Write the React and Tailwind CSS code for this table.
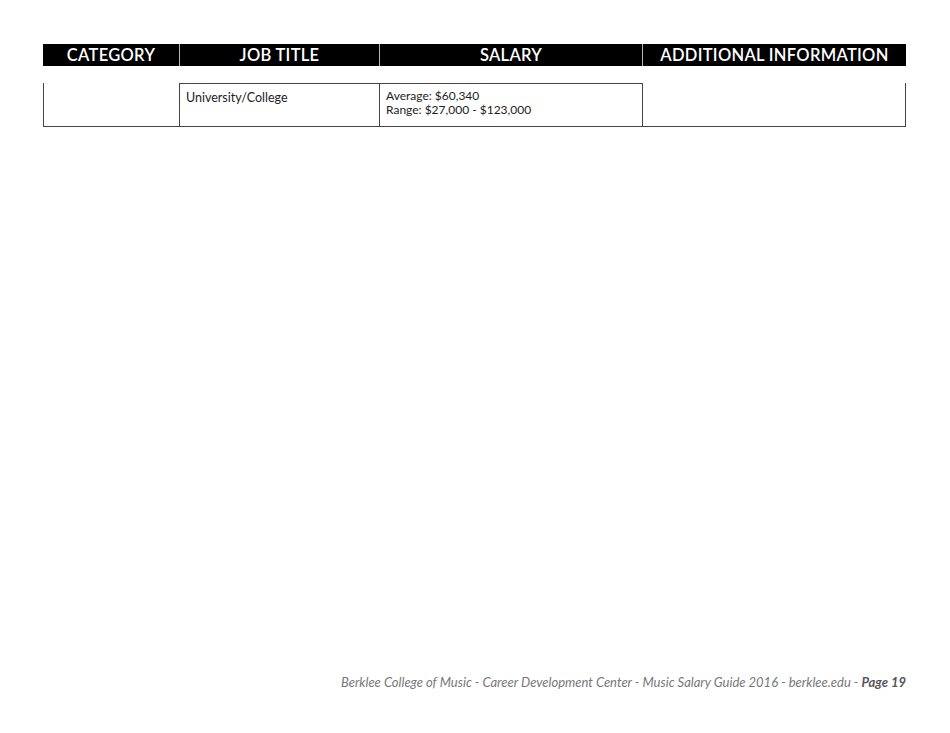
const columns = ["CATEGORY", "JOB TITLE", "SALARY", "ADDITIONAL INFORMATION"];

const App = () => {
  return (
    <div
      className="min-h-[733px] bg-white flex flex-col"
      style={{ fontFamily: "Lato, 'Open Sans', sans-serif" }}
    >
      <div className="pt-[44px] pl-[43px]">
        {/* header bar */}
        <div className="grid grid-cols-[136px_200px_263px_264px] w-[863px] h-[22px] bg-black">
          {columns.map((col, index) => (
            <div
              key={col}
              className={`flex items-center justify-center pt-px text-white font-semibold text-[16.5px] leading-none tracking-[0.3px] ${
                index > 0 ? "border-l border-[#b5b5b5]" : ""
              }`}
            >
              {col}
            </div>
          ))}
        </div>

        {/* data row */}
        <div className="grid grid-cols-[136px_200px_263px_264px] w-[863px] mt-[17px] h-[44px] border-b border-[#444]">
          <div className="border-l border-[#444]"></div>
          <div className="border-l border-t border-[#444] pl-[6px] pt-[7px] text-[12.5px] text-[#222] leading-[14px]">
            University/College
          </div>
          <div className="border-l border-t border-[#444] pl-[6px] pt-[5px] text-[12px] text-[#222] leading-[14px]">
            <div>Average: $60,340</div>
            <div>Range: $27,000 - $123,000</div>
          </div>
          <div className="border-l border-r border-[#444]"></div>
        </div>
      </div>

      {/* footer */}
      <div className="mt-auto pb-[43px] w-[906px] text-right text-[13px] italic text-[#777] leading-4">
        Berklee College of Music - Career Development Center - Music Salary Guide 2016 - berklee.edu -{" "}
        <span className="font-bold text-[#555]">Page 19</span>
      </div>
    </div>
  );
};

export default App;
